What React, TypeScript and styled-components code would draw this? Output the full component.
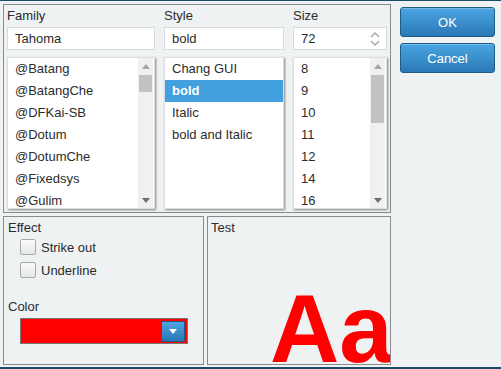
import React from 'react';
import styled, { createGlobalStyle } from 'styled-components';

const GlobalStyle = createGlobalStyle`
  html, body {
    margin: 0;
    padding: 0;
    background: #eef2f3;
  }
  body {
    font-family: 'Liberation Sans', Arial, sans-serif;
    font-size: 13px;
    color: #2c2c2c;
  }
`;

const families = ['@Batang', '@BatangChe', '@DFKai-SB', '@Dotum', '@DotumChe', '@Fixedsys', '@Gulim'];
const styles = ['Chang GUI', 'bold', 'Italic', 'bold and Italic'];
const sizes = ['8', '9', '10', '11', '12', '14', '16'];

const Frame = styled.div`
  width: 501px;
  height: 369px;
  box-sizing: border-box;
  border-top: 1px solid #1b4e69;
  border-bottom: 2px solid #1b4e69;
  padding: 3px 0 0 3px;
  display: flex;
  background: #eef2f3;
`;

const LeftColumn = styled.div`
  width: 388px;
  display: flex;
  flex-direction: column;
  gap: 3px;
`;

const Panel = styled.div<{ $width?: number }>`
  box-sizing: border-box;
  border: 1px solid #8b8b8b;
  ${p => (p.$width ? `width: ${p.$width}px;` : '')}
`;

const FontPanel = styled(Panel)`
  height: 209px;
  padding: 3px 2px 0 3px;
  display: flex;
  gap: 9px;
`;

const Field = styled.div<{ $width: number }>`
  width: ${p => p.$width}px;
  display: flex;
  flex-direction: column;
`;

const Label = styled.div`
  height: 16px;
  line-height: 16px;
`;

const Input = styled.div`
  margin-top: 3px;
  height: 23px;
  box-sizing: border-box;
  border: 1px solid #d7dbdd;
  background: #ffffff;
  padding: 0 6px 0 7px;
  display: flex;
  align-items: center;
  justify-content: space-between;
`;

const ListBox = styled.div`
  margin-top: 7px;
  height: 152px;
  box-sizing: border-box;
  border: 1px solid #dcdfe1;
  box-shadow: 1px 1px 2px rgba(0, 0, 0, 0.45);
  background: #ffffff;
  display: flex;
  overflow: hidden;
`;

const Items = styled.div`
  flex: 1;
  overflow: hidden;
`;

const Item = styled.div<{ $selected?: boolean }>`
  height: 22px;
  line-height: 22px;
  padding-left: 7px;
  white-space: nowrap;
  background: ${p => (p.$selected ? '#42a0de' : 'transparent')};
  color: ${p => (p.$selected ? '#ffffff' : 'inherit')};
  font-weight: ${p => (p.$selected ? 'bold' : 'normal')};
`;

const ScrollBar = styled.div`
  width: 15px;
  margin-right: 1px;
  background: #f0f0f0;
  display: flex;
  flex-direction: column;
`;

const ScrollArrow = styled.div`
  height: 16px;
  display: flex;
  align-items: center;
  justify-content: center;
`;

const ScrollTrack = styled.div`
  flex: 1;
  padding: 1px 1px 0 1px;
`;

const Thumb = styled.div<{ $height: number }>`
  height: ${p => p.$height}px;
  background: #c2c2c2;
`;

const BottomRow = styled.div`
  height: 149px;
  display: flex;
  gap: 3px;
`;

const EffectPanel = styled(Panel)`
  padding: 3px 0 0 4px;
  display: flex;
  flex-direction: column;
`;

const CheckRow = styled.label<{ $top: number }>`
  margin: ${p => p.$top}px 0 0 12px;
  height: 16px;
  display: flex;
  align-items: center;
  gap: 5px;
`;

const CheckBox = styled.span`
  width: 16px;
  height: 16px;
  box-sizing: border-box;
  border: 1px solid #a9a9a9;
  border-radius: 2px;
  background: linear-gradient(#fbfbfb, #e4e6e7);
`;

const ColorLabel = styled(Label)`
  margin-top: 21px;
`;

const ColorBox = styled.div`
  margin: 3px 0 0 12px;
  width: 168px;
  height: 26px;
  box-sizing: border-box;
  border: 1px solid #777777;
  background: #ff0000;
  display: flex;
  align-items: center;
  justify-content: flex-end;
  padding-right: 2px;
`;

const DropButton = styled.div`
  width: 24px;
  height: 21px;
  box-sizing: border-box;
  border: 1px solid #1d5a86;
  border-radius: 2px;
  background: linear-gradient(#4ca6e2, #2877b4);
  display: flex;
  align-items: center;
  justify-content: center;
`;

const TestPanel = styled(Panel)`
  padding: 3px 0 0 3px;
  display: flex;
  flex-direction: column;
  overflow: hidden;
`;

const Preview = styled.div`
  flex: 1;
  display: flex;
  align-items: flex-end;
  padding-left: 59px;
  overflow: hidden;
`;

const Sample = styled.span`
  font-family: 'Liberation Sans', Arial, sans-serif;
  font-weight: bold;
  font-size: 96px;
  line-height: 1;
  margin-bottom: -13px;
  color: #ff0000;
  white-space: nowrap;
`;

const ButtonColumn = styled.div`
  margin-left: 9px;
  padding-top: 3px;
  display: flex;
  flex-direction: column;
  gap: 6px;
`;

const Button = styled.button`
  width: 95px;
  height: 30px;
  box-sizing: border-box;
  border: 1px solid #1f5d89;
  border-radius: 3px;
  background: linear-gradient(#4aa5e2, #2a79b6);
  box-shadow: inset 0 1px 0 rgba(255, 255, 255, 0.25);
  color: #ffffff;
  font-family: 'Liberation Sans', Arial, sans-serif;
  font-size: 13px;
  padding: 0;
`;

const Triangle: React.FC<{ up?: boolean; color: string }> = ({ up, color }) => (
  <svg width="8" height="5" viewBox="0 0 8 5">
    <polygon points={up ? '0,5 8,5 4,0' : '0,0 8,0 4,5'} fill={color} />
  </svg>
);

const Spinner = () => (
  <svg width="10" height="14" viewBox="0 0 10 14">
    <polyline points="1,5 5,1 9,5" fill="none" stroke="#a3a3a3" strokeWidth="1.3" />
    <polyline points="1,9 5,13 9,9" fill="none" stroke="#a3a3a3" strokeWidth="1.3" />
  </svg>
);

const Scroll: React.FC<{ thumb: number }> = ({ thumb }) => (
  <ScrollBar>
    <ScrollArrow><Triangle up color="#a6a6a6" /></ScrollArrow>
    <ScrollTrack><Thumb $height={thumb} /></ScrollTrack>
    <ScrollArrow><Triangle color="#6e6e6e" /></ScrollArrow>
  </ScrollBar>
);

const App: React.FC = () => (
  <Frame>
    <GlobalStyle />
    <LeftColumn>
      <FontPanel>
        <Field $width={148}>
          <Label>Family</Label>
          <Input>Tahoma</Input>
          <ListBox>
            <Items>
              {families.map(f => <Item key={f}>{f}</Item>)}
            </Items>
            <Scroll thumb={17} />
          </ListBox>
        </Field>
        <Field $width={120}>
          <Label>Style</Label>
          <Input>bold</Input>
          <ListBox>
            <Items>
              {styles.map(s => <Item key={s} $selected={s === 'bold'}>{s}</Item>)}
            </Items>
          </ListBox>
        </Field>
        <Field $width={94}>
          <Label>Size</Label>
          <Input>
            72
            <Spinner />
          </Input>
          <ListBox>
            <Items>
              {sizes.map(s => <Item key={s}>{s}</Item>)}
            </Items>
            <Scroll thumb={48} />
          </ListBox>
        </Field>
      </FontPanel>
      <BottomRow>
        <EffectPanel $width={201}>
          <Label>Effect</Label>
          <CheckRow $top={3}><CheckBox />Strike out</CheckRow>
          <CheckRow $top={7}><CheckBox />Underline</CheckRow>
          <ColorLabel>Color</ColorLabel>
          <ColorBox>
            <DropButton><Triangle color="#ffffff" /></DropButton>
          </ColorBox>
        </EffectPanel>
        <TestPanel $width={184}>
          <Label>Test</Label>
          <Preview>
            <Sample>Aa</Sample>
          </Preview>
        </TestPanel>
      </BottomRow>
    </LeftColumn>
    <ButtonColumn>
      <Button>OK</Button>
      <Button>Cancel</Button>
    </ButtonColumn>
  </Frame>
);

export default App;
